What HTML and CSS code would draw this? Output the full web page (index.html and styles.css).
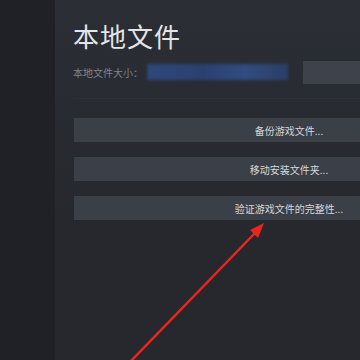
FILE: index.html
```html
<!DOCTYPE html>
<html lang="zh-CN">
<head>
  <meta charset="UTF-8">
  <title>本地文件</title>
  <link rel="stylesheet" href="styles.css">
</head>
<body>
  <div class="app">
    <div class="sidebar"></div>
    <div class="panel">
      <h1>本地文件</h1>
      <div class="size-row">
        <span class="label">本地文件大小：</span>
        <span class="masked"></span>
        <span class="browse"></span>
      </div>
      <div class="divider"></div>
      <div class="actions">
        <button class="action">备份游戏文件...</button>
        <button class="action">移动安装文件夹...</button>
        <button class="action">验证游戏文件的完整性...</button>
      </div>
    </div>
  </div>

  <!-- 标注箭头 -->
  <svg class="arrow" width="360" height="360" viewBox="0 0 360 360">
    <line x1="130" y1="362" x2="256" y2="232" stroke="#e8261c" stroke-width="2.5" stroke-linecap="round"/>
    <polygon points="264,223 250,230 258,238" fill="#e8261c"/>
  </svg>
</body>
</html>
```

FILE: styles.css
```css
body {
  margin: 0;
  width: 360px;
  height: 360px;
  overflow: hidden;
  background-color: #25272d;
  font-family: "Noto Sans CJK SC", "Noto Sans", sans-serif;
}

.app {
  display: flex;
  height: 360px;
}

.sidebar {
  width: 55px;
  flex-shrink: 0;
  background-color: #1f2126;
}

.panel {
  flex: 1;
  padding: 18px 0 0 18px;
  background: linear-gradient(#2b2e35, #26282e 60%);
  overflow: hidden;
}

h1 {
  margin: 0;
  color: #e4e5e7;
  font-size: 26px;
  font-weight: 400;
  line-height: 36px;
  letter-spacing: 1px;
}

.size-row {
  display: flex;
  align-items: center;
  margin-top: 6px;
  height: 24px;
}

.label {
  color: #7f838b;
  font-size: 10px;
  width: 78px;
}

.masked {
  width: 147px;
  height: 16px;
  background: linear-gradient(90deg, #2d4879, #2a4170 40%, #304c80 70%, #2b3f66);
  filter: blur(1.5px);
}

.browse {
  width: 60px;
  height: 23px;
  margin-left: 15px;
  background-color: #3e424b;
}

.divider {
  height: 1px;
  margin-top: 14px;
  background-color: #2f3239;
}

.actions {
  display: flex;
  flex-direction: column;
  gap: 15px;
  margin-top: 19px;
  margin-left: 1px;
}

.action {
  width: 430px;
  height: 24px;
  border: none;
  background-color: #3b3f47;
  color: #d6d7da;
  font-family: inherit;
  font-size: 10px;
  text-align: center;
  padding: 0;
}

.arrow {
  position: absolute;
  left: 0;
  top: 0;
}
```
